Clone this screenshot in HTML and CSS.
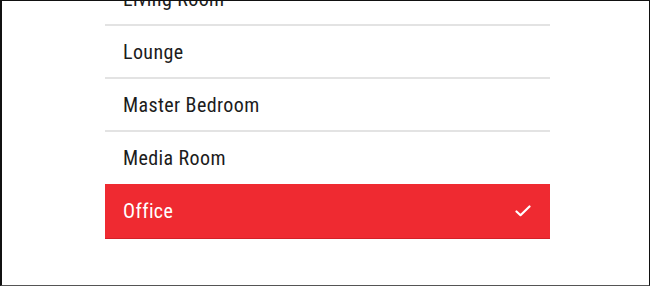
FILE: index.html
```
<!DOCTYPE html>
<html>
<head>
<meta charset="utf-8">
<link rel="stylesheet" href="styles.css">
</head>
<body>
<div class="frame">
  <ul class="rooms">
    <li class="room">Living Room</li>
    <li class="room">Lounge</li>
    <li class="room">Master Bedroom</li>
    <li class="room">Media Room</li>
    <li class="room selected">
      <span>Office</span>
      <svg class="check" width="16" height="12" viewBox="0 0 16 12"><path d="M1.5 6.5 L5.5 10.2 L14.5 1.5" fill="none" stroke="#fff" stroke-width="2.2" stroke-linecap="round" stroke-linejoin="round"/></svg>
    </li>
  </ul>
</div>
</body>
</html>
```
FILE: styles.css
```
html, body {
  margin: 0;
  padding: 0;
  background: #fff;
}
.frame {
  width: 650px;
  height: 286px;
  box-sizing: border-box;
  border: 1px solid #111;
  border-left-width: 2px;
  border-bottom-color: #555;
  overflow: hidden;
  background: #fff;
}
.rooms {
  list-style: none;
  margin: -28px 0 0 103px;
  padding: 0;
  width: 445px;
  font-family: "Liberation Sans Narrow", "Roboto Condensed", "DejaVu Sans Condensed", sans-serif;
  font-size: 20px;
  letter-spacing: 0.4px;
  color: #1c1c1c;
}
.room {
  display: flex;
  align-items: center;
  justify-content: space-between;
  height: 51px;
  padding: 0 19px 0 18px;
  border-bottom: 2px solid #e3e3e3;
}
.room:nth-child(4) {
  border-bottom: none;
  height: 52px;
}
.selected {
  background: #ef2a31;
  color: #fff;
  height: 55px;
  border-bottom: 1px solid #d42028;
  box-sizing: border-box;
}
.check {
  display: block;
}
```
